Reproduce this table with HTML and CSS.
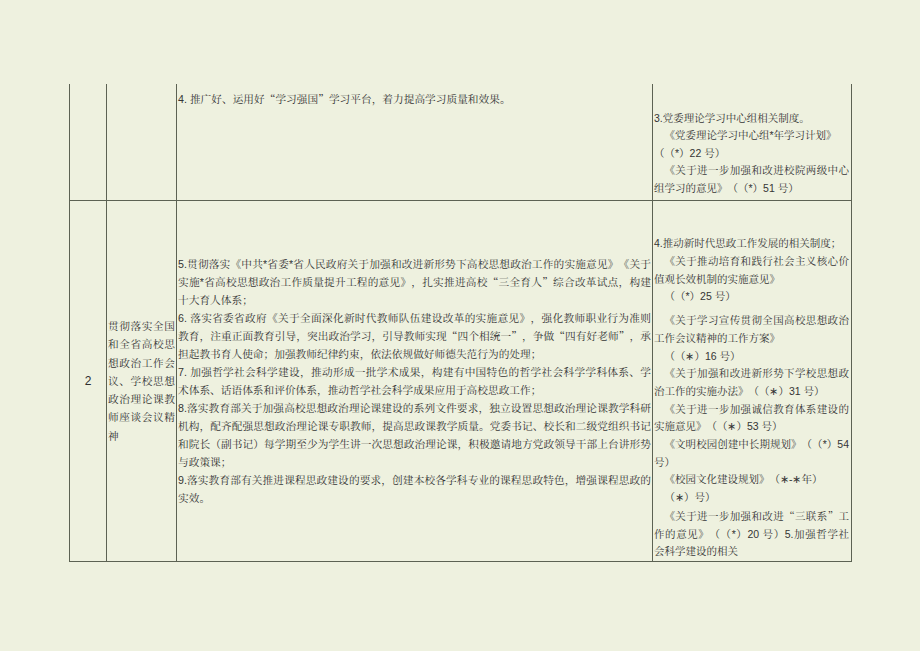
FILE: index.html
```html
<!DOCTYPE html>
<html lang="zh-CN">
<head>
<meta charset="utf-8">
<title>思政工作任务表</title>
<link rel="stylesheet" href="styles.css">
</head>
<body>
<table class="grid">
  <colgroup>
    <col class="c1"><col class="c2"><col class="c3"><col class="c4">
  </colgroup>
  <tr class="r1">
    <td class="num"></td>
    <td class="title"></td>
    <td class="body top">
      <div class="ln">4. 推广好、运用好<span class="q">“</span>学习强国<span class="q">”</span>学习平台，着力提高学习质量和效果。</div>
    </td>
    <td class="refs r1refs">
      <div class="ln">3.党委理论学习中心组相关制度。</div>
      <div class="ln in">《党委理论学习中心组*年学习计划》</div>
      <div class="ln">（（*）22 号）</div>
      <div class="ln in j">《关于进一步加强和改进校院两级中心</div>
      <div class="ln">组学习的意见》（（*）51 号）</div>
    </td>
  </tr>
  <tr class="r2">
    <td class="num mid">2</td>
    <td class="title mid">
      <div class="ln j">贯彻落实全国</div>
      <div class="ln j">和全省高校思</div>
      <div class="ln j">想政治工作会</div>
      <div class="ln j">议、学校思想</div>
      <div class="ln j">政治理论课教</div>
      <div class="ln j">师座谈会议精</div>
      <div class="ln">神</div>
    </td>
    <td class="body mid">
      <div class="ln j">5.贯彻落实《中共*省委*省人民政府关于加强和改进新形势下高校思想政治工作的实施意见》《关于</div>
      <div class="ln j">实施*省高校思想政治工作质量提升工程的意见》，扎实推进高校<span class="q">“</span>三全育人<span class="q">”</span>综合改革试点，构建</div>
      <div class="ln">十大育人体系；</div>
      <div class="ln j">6. 落实省委省政府《关于全面深化新时代教师队伍建设改革的实施意见》，强化教师职业行为准则</div>
      <div class="ln j">教育，注重正面教育引导，突出政治学习，引导教师实现<span class="q">“</span>四个相统一<span class="q">”</span>，争做<span class="q">“</span>四有好老师<span class="q">”</span>，承</div>
      <div class="ln">担起教书育人使命；加强教师纪律约束，依法依规做好师德失范行为的处理；</div>
      <div class="ln j">7. 加强哲学社会科学建设，推动形成一批学术成果，构建有中国特色的哲学社会科学学科体系、学</div>
      <div class="ln">术体系、话语体系和评价体系，推动哲学社会科学成果应用于高校思政工作；</div>
      <div class="ln j">8.落实教育部关于加强高校思想政治理论课建设的系列文件要求，独立设置思想政治理论课教学科研</div>
      <div class="ln j">机构，配齐配强思想政治理论课专职教师，提高思政课教学质量。党委书记、校长和二级党组织书记</div>
      <div class="ln j">和院长（副书记）每学期至少为学生讲一次思想政治理论课，积极邀请地方党政领导干部上台讲形势</div>
      <div class="ln">与政策课；</div>
      <div class="ln j">9.落实教育部有关推进课程思政建设的要求，创建本校各学科专业的课程思政特色，增强课程思政的</div>
      <div class="ln">实效。</div>
    </td>
    <td class="refs r2refs">
      <div class="ln">4.推动新时代思政工作发展的相关制度；</div>
      <div class="ln in j">《关于推动培育和践行社会主义核心价</div>
      <div class="ln">值观长效机制的实施意见》</div>
      <div class="ln in">（（*）25 号）</div>
      <div class="ln in j gap">《关于学习宣传贯彻全国高校思想政治</div>
      <div class="ln">工作会议精神的工作方案》</div>
      <div class="ln in">（（∗）16 号）</div>
      <div class="ln in j">《关于加强和改进新形势下学校思想政</div>
      <div class="ln">治工作的实施办法》（（∗）31 号）</div>
      <div class="ln in j">《关于进一步加强诚信教育体系建设的</div>
      <div class="ln">实施意见》（（∗）53 号）</div>
      <div class="ln in j nw">《文明校园创建中长期规划》（（*）54</div>
      <div class="ln">号）</div>
      <div class="ln in">《校园文化建设规划》（∗-∗年）</div>
      <div class="ln in">（∗）号）</div>
      <div class="ln in j">《关于进一步加强和改进<span class="q">“</span>三联系<span class="q">”</span>工</div>
      <div class="ln j">作的意见》（（*）20 号）5.加强哲学社</div>
      <div class="ln">会科学建设的相关</div>
    </td>
  </tr>
</table>
</body>
</html>
```

FILE: styles.css
```css
html, body {
  margin: 0;
  padding: 0;
  background: #eef1df;
}

body {
  width: 920px;
  height: 651px;
  overflow: hidden;
  font-family: "Liberation Sans", "Noto Serif CJK SC", "Noto Sans CJK SC", sans-serif;
  color: #353535;
  text-spacing-trim: space-all;
}

.q {
  font-family: "Noto Serif CJK SC", "Noto Sans CJK SC", sans-serif;
  font-feature-settings: "fwid" 1;
}

.grid {
  margin: 84px 0 0 69px;
  width: 783px;
  border-collapse: collapse;
  table-layout: fixed;
}

.c1 { width: 37px; }
.c2 { width: 70px; }
.c3 { width: 476px; }
.c4 { width: 199px; }

.grid td {
  border: 1px solid #5c6253;
  padding: 0;
  vertical-align: top;
  overflow: hidden;
}

.r1 td {
  border-top: none;
  height: 110px;
}

.r2 td {
  height: 360px;
}

.ln {
  text-align: left;
}

.j {
  text-align: justify;
  text-align-last: justify;
}

.nw {
  white-space: nowrap;
}

.in {
  text-indent: 1em;
}

.mid {
  vertical-align: middle !important;
}

.num {
  text-align: center;
  font-size: 12px;
  color: #2e2e2e;
}

.title {
  font-size: 10.7px;
  line-height: 18.2px;
  padding: 0 1px 0 1px !important;
}

.body {
  font-size: 10.7px;
  line-height: 18px;
  padding: 0 1px 0 1px !important;
}

.body.top {
  padding-top: 6px !important;
}

.refs {
  font-size: 10.5px;
  padding: 0 2px 0 1px !important;
  vertical-align: bottom !important;
}

.r1refs {
  line-height: 17.5px;
  padding-bottom: 3px !important;
}

.r2refs {
  line-height: 17.7px;
}

.gap {
  margin-top: 6px;
}
```
